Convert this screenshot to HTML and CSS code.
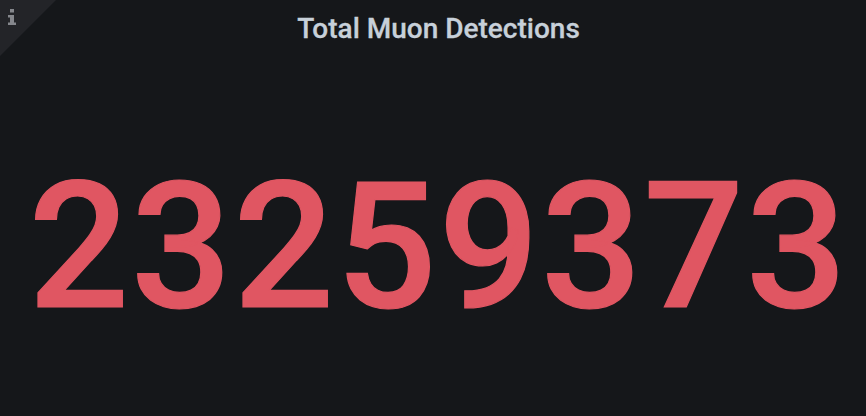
FILE: index.html
```html
<!DOCTYPE html>
<html lang="en">
<head>
    <meta charset="UTF-8">
    <title>Total Muon Detections</title>
    <link rel="stylesheet" href="styles.css">
</head>
<body>
    <div class="panel">
        <div class="corner">
            <svg class="corner-icon" width="8" height="16" viewBox="0 0 8 16">
                <path d="M2 0h4v3.5H2zM0 6h6v7.5h2V16H0v-2.5h2V8.5H0z" fill="#85878c"/>
            </svg>
        </div>
        <h2 class="title">Total Muon Detections</h2>
        <div class="stat">23259373</div>
    </div>
</body>
</html>
```

FILE: styles.css
```css
html, body {
    margin: 0;
    height: 100%;
    overflow: hidden;
}
body {
    background: #15171a;
    font-family: Roboto, sans-serif;
}
.panel {
    position: relative;
    height: 416px;
    display: flex;
    flex-direction: column;
}
.corner {
    position: absolute;
    top: 0;
    left: 0;
    width: 0;
    height: 0;
    border-top: 56px solid #232428;
    border-right: 56px solid transparent;
}
.corner-icon {
    position: absolute;
    top: -47px;
    left: 8px;
}
.title {
    margin: 0;
    padding: 11px 0 0 11px;
    text-align: center;
    font-size: 28px;
    line-height: 36px;
    font-weight: 500;
    color: #c7d0d9;
    -webkit-text-stroke: 0.3px #c7d0d9;
}
.stat {
    flex: 1;
    display: flex;
    align-items: center;
    justify-content: center;
    padding: 30px 0 0 11px;
    font-size: 177px;
    letter-spacing: 1.9px;
    font-weight: 500;
    color: #e05662;
    -webkit-text-stroke: 1.2px #e05662;
}
```
